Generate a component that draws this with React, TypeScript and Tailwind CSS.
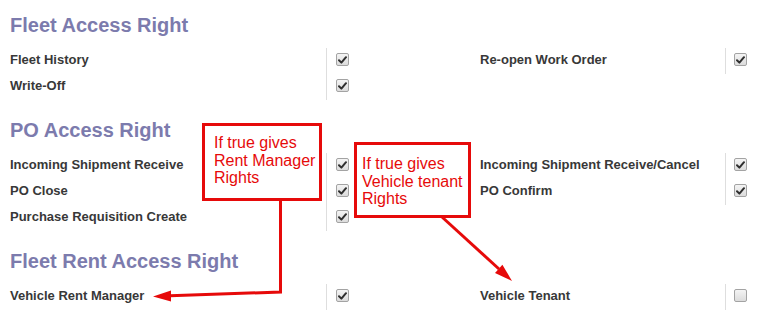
type Row = [string, boolean, string | null, boolean]

const sections: { title: string; rows: Row[] }[] = [
  {
    title: 'Fleet Access Right',
    rows: [
      ['Fleet History', true, 'Re-open Work Order', true],
      ['Write-Off', true, null, false],
    ],
  },
  {
    title: 'PO Access Right',
    rows: [
      ['Incoming Shipment Receive', true, 'Incoming Shipment Receive/Cancel', true],
      ['PO Close', true, 'PO Confirm', true],
      ['Purchase Requisition Create', true, null, false],
    ],
  },
  {
    title: 'Fleet Rent Access Right',
    rows: [['Vehicle Rent Manager', true, 'Vehicle Tenant', false]],
  },
]

const Checkbox = ({ checked }: { checked: boolean }) => (
  <div className="w-[13px] h-[13px] rounded-[2px] border border-[#a3a3a3] bg-gradient-to-b from-[#f4f4f4] to-[#dcdcdc] flex items-center justify-center">
    {checked && (
      <svg width="9" height="8" viewBox="0 0 9 8">
        <path d="M1 4.2 L3.4 6.6 L8 1.2" fill="none" stroke="#2f2f2f" strokeWidth="2" strokeLinecap="round" strokeLinejoin="round" />
      </svg>
    )}
  </div>
)

const App = () => {
  return (
    <div className="relative w-[768px] h-[318px] overflow-hidden bg-white font-['Liberation_Sans',Arial,sans-serif] pt-[13px]">
      {sections.map((s, i) => (
        <section key={s.title} className={i > 0 ? 'mt-[18px]' : ''}>
          <h2 className="pl-[10px] mb-[11px] h-6 text-[20px] leading-6 font-bold text-[#7c7bad]">{s.title}</h2>
          {s.rows.map(([left, lc, right, rc]) => (
            <div key={left} className="flex h-[26px] text-[13px] leading-[18px] font-bold text-[#383838]">
              <div className="flex w-[384px]">
                <div className="w-[326px] pl-[10px] pt-[3px]">{left}</div>
                <div className="border-l border-[#dedede] pl-[9px] pt-[5px]">
                  <Checkbox checked={lc} />
                </div>
              </div>
              {right && (
                <div className="flex">
                  <div className="w-[341px] pl-[96px] pt-[3px]">{right}</div>
                  <div className="border-l border-[#dedede] pl-[8px] pt-[5px]">
                    <Checkbox checked={rc} />
                  </div>
                </div>
              )}
            </div>
          ))}
        </section>
      ))}

      {/* annotation callouts */}
      <div className="absolute left-[202px] top-[123px] w-[120px] h-[78px] border-[3px] border-[#e60a0a] pl-[9px] pt-[8px] text-[16px] leading-[17.5px] text-[#e60a0a]">
        If true gives
        <br />
        Rent Manager
        <br />
        Rights
      </div>
      <div className="absolute left-[354px] top-[142px] w-[117px] h-[76px] border-[3px] border-[#e60a0a] pl-[5px] pt-[10px] text-[16px] leading-[17.5px] text-[#e60a0a]">
        If true gives
        <br />
        Vehicle tenant
        <br />
        Rights
      </div>
      <svg className="absolute left-0 top-0" width="768" height="318" viewBox="0 0 768 318">
        <polyline points="280.5,201 280.5,292 170,295.8" fill="none" stroke="#e60a0a" strokeWidth="3" />
        <polygon points="153,296.5 171,290.6 171,301.6" fill="#e60a0a" />
        <line x1="442" y1="217" x2="499" y2="269" stroke="#e60a0a" strokeWidth="3" />
        <polygon points="512,281 495,272.9 502.4,264.7" fill="#e60a0a" />
      </svg>
    </div>
  )
}

export default App
